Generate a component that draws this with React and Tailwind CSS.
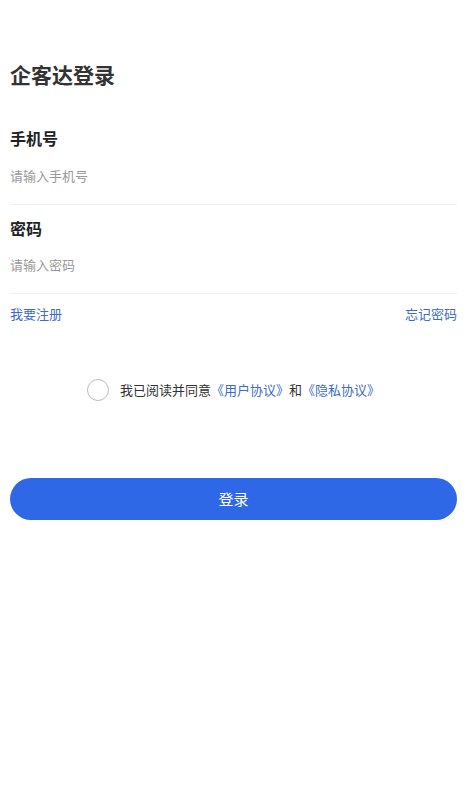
import { useState } from "react";

const font = { fontFamily: '"Noto Sans CJK SC", "Noto Sans", sans-serif' };

const App = () => {
  const [formData, setFormData] = useState({ phone: "", password: "" });
  const [agreed, setAgreed] = useState(false);

  const handleChange = (e) => {
    const { name, value } = e.target;
    setFormData((prev) => ({ ...prev, [name]: value }));
  };

  return (
    <div className="min-h-[800px] w-full bg-white px-[10px]" style={font}>
      <h1 className="pt-[60px] text-[21px] leading-[28px] font-bold text-[#333]">
        企客达登录
      </h1>

      <div className="mt-[38px]">
        <label htmlFor="phone" className="block text-[16px] leading-[24px] font-bold text-[#222]">
          手机号
        </label>
        <input
          id="phone"
          name="phone"
          type="text"
          placeholder="请输入手机号"
          value={formData.phone}
          onChange={handleChange}
          className="mt-[16px] block h-[20px] w-full text-[13px] leading-[20px] text-[#333] placeholder:text-[#999] outline-none"
        />
        <div className="mt-[18px] h-px bg-[#f0f0f0]" />
      </div>

      <div className="mt-[11px]">
        <label htmlFor="password" className="block text-[16px] leading-[24px] font-bold text-[#222]">
          密码
        </label>
        <input
          id="password"
          name="password"
          type="password"
          placeholder="请输入密码"
          value={formData.password}
          onChange={handleChange}
          className="mt-[15px] block h-[20px] w-full text-[13px] leading-[20px] text-[#333] placeholder:text-[#999] outline-none"
        />
        <div className="mt-[18px] h-px bg-[#f0f0f0]" />
      </div>

      <div className="mt-[10px] flex items-center justify-between text-[13px] leading-[20px] text-[#3b6cc6]">
        <span>我要注册</span>
        <span>忘记密码</span>
      </div>

      <div className="mt-[55px] flex items-center justify-center gap-[11px] text-[13px] leading-[22px] text-[#333]">
        <button
          type="button"
          onClick={() => setAgreed((v) => !v)}
          className={`h-[22px] w-[22px] rounded-full border ${
            agreed ? "border-[#2e68e6] bg-[#2e68e6]" : "border-[#bbb] bg-white"
          }`}
        />
        <p>
          我已阅读并同意<span className="text-[#3b6cc6]">《用户协议》</span>和
          <span className="text-[#3b6cc6]">《隐私协议》</span>
        </p>
      </div>

      <button
        type="button"
        className="mt-[77px] h-[42px] w-full rounded-full bg-[#2e68e6] text-[15px] text-white"
      >
        登录
      </button>
    </div>
  );
};

export default App;
